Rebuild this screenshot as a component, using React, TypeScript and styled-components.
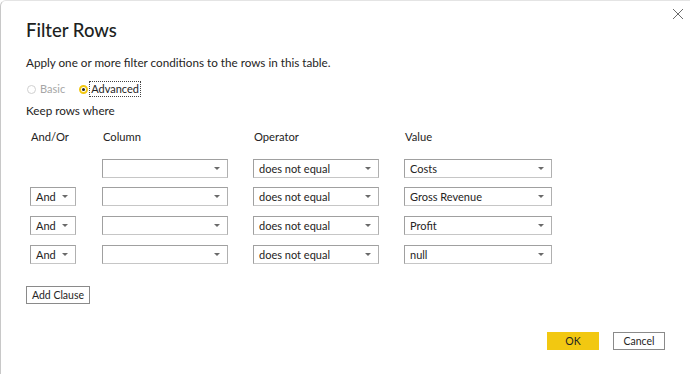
import React from 'react'
import styled, { createGlobalStyle } from 'styled-components'

const GlobalStyle = createGlobalStyle`
  html, body {
    margin: 0;
    padding: 0;
    background: #fff;
  }
  body {
    font-family: Lato, "Liberation Sans", sans-serif;
    color: #252423;
  }
`

const Dialog = styled.div`
  position: relative;
  box-sizing: border-box;
  width: 690px;
  height: 374px;
  border-left: 1px solid #c8c8c8;
  border-top: 1px solid #e4e4e4;
  border-top-left-radius: 6px;
  padding: 16px 25px 0 25px;
  display: flex;
  flex-direction: column;
  overflow: hidden;
`

const Close = styled.button`
  position: absolute;
  top: 6px;
  right: 5px;
  width: 14px;
  height: 14px;
  padding: 0;
  border: 0;
  background: none;
  cursor: pointer;
`

const Title = styled.h1`
  margin: 0;
  font-size: 18.5px;
  font-weight: 500;
  line-height: 26px;
  color: #201f1e;
`

const Subtitle = styled.p`
  margin: 11px 0 0;
  font-size: 11.7px;
  line-height: 16px;
  color: #252423;
`

const RadioRow = styled.div`
  display: flex;
  align-items: center;
  gap: 11px;
  margin-top: 10px;
  height: 18px;
`

const RadioLabel = styled.label<{ disabled?: boolean; focused?: boolean }>`
  display: flex;
  align-items: center;
  font-size: 11px;
  color: ${p => (p.disabled ? '#a6a6a6' : '#252423')};
  span {
    padding: 0 1px;
    border: 1px dotted ${p => (p.focused ? '#444' : 'transparent')};
    line-height: 14px;
  }
`

const RadioDot = styled.i<{ checked?: boolean }>`
  box-sizing: border-box;
  width: 9px;
  height: 9px;
  margin: 0 ${p => (p.checked ? 1 : 2)}px 0 1px;
  border-radius: 50%;
  border: ${p => (p.checked ? '2px solid #f2c811' : '1px solid #d0d0d0')};
  display: flex;
  align-items: center;
  justify-content: center;
  &::after {
    content: '';
    width: 3px;
    height: 3px;
    border-radius: 50%;
    background: ${p => (p.checked ? '#252423' : 'transparent')};
  }
`

const Caption = styled.div`
  margin-top: 4px;
  font-size: 11.7px;
  line-height: 16px;
`

const Grid = styled.div`
  display: grid;
  grid-template-columns: 72px 151px 151px 148px;
  grid-auto-rows: 19px;
  row-gap: 9.7px;
  margin: 12px 0 0 4px;
`

const Head = styled.div`
  font-size: 11.2px;
  line-height: 14px;
  margin-bottom: 2px;
  padding-left: 1px;
`

const Select = styled.div<{ w: number }>`
  box-sizing: border-box;
  width: ${p => p.w}px;
  height: 19px;
  border: 1px solid #a0a0a0;
  border-bottom-color: #c6c6c6;
  border-right-color: #b0b0b0;
  background: #fff;
  display: flex;
  align-items: center;
  padding: 0 7px 0 5px;
  font-size: 11px;
  color: #252423;
  &::after {
    content: '';
    margin-left: auto;
    border-left: 3px solid transparent;
    border-right: 3px solid transparent;
    border-top: 3px solid #6a6a6a;
  }
`

const Spacer = styled.div``

const Button = styled.button<{ primary?: boolean }>`
  box-sizing: border-box;
  height: 18px;
  padding: 0 6px;
  font-family: inherit;
  font-size: 10.5px;
  color: #252423;
  background: ${p => (p.primary ? '#f2c811' : '#fff')};
  border: 1px solid ${p => (p.primary ? '#f2c811' : '#8a8a8a')};
  cursor: pointer;
`

const AddClause = styled(Button)`
  align-self: flex-start;
  margin-top: 22px;
  width: 64px;
  padding: 0;
`

const Footer = styled.div`
  display: flex;
  justify-content: flex-end;
  gap: 14px;
  margin-top: 28px;
  button {
    width: 52px;
  }
`

const rows = [
  { andOr: false, value: 'Costs' },
  { andOr: true, value: 'Gross Revenue' },
  { andOr: true, value: 'Profit' },
  { andOr: true, value: 'null' },
]

function App() {
  return (
    <Dialog>
      <GlobalStyle />
      <Close aria-label="Close">
        <svg width="14" height="14" viewBox="0 0 14 14">
          <path d="M2 2 L12 12 M12 2 L2 12" stroke="#6b6b6b" strokeWidth="1" />
        </svg>
      </Close>
      <Title>Filter Rows</Title>
      <Subtitle>Apply one or more filter conditions to the rows in this table.</Subtitle>
      <RadioRow>
        <RadioLabel disabled>
          <RadioDot />
          <span>Basic</span>
        </RadioLabel>
        <RadioLabel focused>
          <RadioDot checked />
          <span>Advanced</span>
        </RadioLabel>
      </RadioRow>
      <Caption>Keep rows where</Caption>
      <Grid>
        <Head>And/Or</Head>
        <Head>Column</Head>
        <Head>Operator</Head>
        <Head>Value</Head>
        {rows.map((r, i) => (
          <React.Fragment key={i}>
            {r.andOr ? <Select w={46}>And</Select> : <Spacer />}
            <Select w={126} />
            <Select w={126}>does not equal</Select>
            <Select w={148}>{r.value}</Select>
          </React.Fragment>
        ))}
      </Grid>
      <AddClause>Add Clause</AddClause>
      <Footer>
        <Button primary>OK</Button>
        <Button>Cancel</Button>
      </Footer>
    </Dialog>
  )
}

export default App
